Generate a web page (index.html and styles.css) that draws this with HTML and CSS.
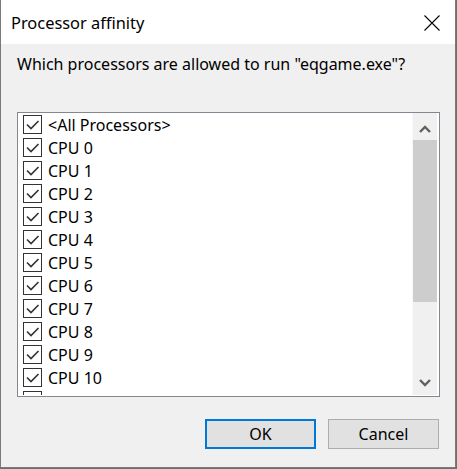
FILE: index.html
```html
<!DOCTYPE html>
<html lang="en">
<head>
<meta charset="utf-8">
<title>Processor affinity</title>
<link rel="stylesheet" href="styles.css">
</head>
<body>
<div class="window">
  <div class="titlebar">
    <span class="title">Processor affinity</span>
    <span class="close">
      <svg width="16" height="16" viewBox="0 0 16 16"><path d="M0.5 0.5 L15.5 15.5 M15.5 0.5 L0.5 15.5" stroke="#000" stroke-width="1.1" fill="none"/></svg>
    </span>
  </div>
  <div class="content">
    <p class="prompt">Which processors are allowed to run "eqgame.exe"?</p>
    <div class="listbox">
      <ul class="items">
        <li class="row"><span class="box"><svg width="17" height="17" viewBox="0 0 17 17"><path d="M3 8.5 L7 12.5 L14.5 5" stroke="#333" stroke-width="1.6" fill="none"/></svg></span><span class="label">&lt;All Processors&gt;</span></li>
        <li class="row"><span class="box"><svg width="17" height="17" viewBox="0 0 17 17"><path d="M3 8.5 L7 12.5 L14.5 5" stroke="#333" stroke-width="1.6" fill="none"/></svg></span><span class="label">CPU 0</span></li>
        <li class="row"><span class="box"><svg width="17" height="17" viewBox="0 0 17 17"><path d="M3 8.5 L7 12.5 L14.5 5" stroke="#333" stroke-width="1.6" fill="none"/></svg></span><span class="label">CPU 1</span></li>
        <li class="row"><span class="box"><svg width="17" height="17" viewBox="0 0 17 17"><path d="M3 8.5 L7 12.5 L14.5 5" stroke="#333" stroke-width="1.6" fill="none"/></svg></span><span class="label">CPU 2</span></li>
        <li class="row"><span class="box"><svg width="17" height="17" viewBox="0 0 17 17"><path d="M3 8.5 L7 12.5 L14.5 5" stroke="#333" stroke-width="1.6" fill="none"/></svg></span><span class="label">CPU 3</span></li>
        <li class="row"><span class="box"><svg width="17" height="17" viewBox="0 0 17 17"><path d="M3 8.5 L7 12.5 L14.5 5" stroke="#333" stroke-width="1.6" fill="none"/></svg></span><span class="label">CPU 4</span></li>
        <li class="row"><span class="box"><svg width="17" height="17" viewBox="0 0 17 17"><path d="M3 8.5 L7 12.5 L14.5 5" stroke="#333" stroke-width="1.6" fill="none"/></svg></span><span class="label">CPU 5</span></li>
        <li class="row"><span class="box"><svg width="17" height="17" viewBox="0 0 17 17"><path d="M3 8.5 L7 12.5 L14.5 5" stroke="#333" stroke-width="1.6" fill="none"/></svg></span><span class="label">CPU 6</span></li>
        <li class="row"><span class="box"><svg width="17" height="17" viewBox="0 0 17 17"><path d="M3 8.5 L7 12.5 L14.5 5" stroke="#333" stroke-width="1.6" fill="none"/></svg></span><span class="label">CPU 7</span></li>
        <li class="row"><span class="box"><svg width="17" height="17" viewBox="0 0 17 17"><path d="M3 8.5 L7 12.5 L14.5 5" stroke="#333" stroke-width="1.6" fill="none"/></svg></span><span class="label">CPU 8</span></li>
        <li class="row"><span class="box"><svg width="17" height="17" viewBox="0 0 17 17"><path d="M3 8.5 L7 12.5 L14.5 5" stroke="#333" stroke-width="1.6" fill="none"/></svg></span><span class="label">CPU 9</span></li>
        <li class="row"><span class="box"><svg width="17" height="17" viewBox="0 0 17 17"><path d="M3 8.5 L7 12.5 L14.5 5" stroke="#333" stroke-width="1.6" fill="none"/></svg></span><span class="label">CPU 10</span></li>
        <li class="row"><span class="box"></span></li>
      </ul>
      <div class="scrollbar">
        <div class="sb-btn sb-up"><svg width="12" height="8" viewBox="0 0 12 8"><path d="M1 7 L6 2 L11 7" stroke="#606060" stroke-width="2.4" fill="none"/></svg></div>
        <div class="thumb"></div>
        <div class="track"></div>
        <div class="sb-btn sb-down"><svg width="12" height="8" viewBox="0 0 12 8"><path d="M1 1 L6 6 L11 1" stroke="#606060" stroke-width="2.4" fill="none"/></svg></div>
      </div>
    </div>
    <div class="actions">
      <button class="btn btn-default">OK</button>
      <button class="btn">Cancel</button>
    </div>
  </div>
</div>
</body>
</html>
```
FILE: styles.css
```css
html, body {
  margin: 0;
  padding: 0;
}
body {
  background: #6e6e6e;
  width: 457px;
  height: 469px;
  overflow: hidden;
  font-family: "Noto Sans", "Open Sans", sans-serif;
  font-size: 16px;
  color: #000;
}
.window {
  width: 456px;
  height: 468px;
  box-sizing: border-box;
  border-left: 1px solid #7a7a7a;
  border-right: 1px solid #7a7a7a;
  border-bottom: 1px solid #7a7a7a;
  display: flex;
  flex-direction: column;
  background: #f0f0f0;
}
.titlebar {
  height: 44px;
  flex: none;
  background: #fff;
  display: flex;
  align-items: center;
  justify-content: space-between;
}
.title {
  padding-left: 10px;
  padding-top: 1px;
  line-height: 22px;
  font-size: 16.4px;
}
.close {
  width: 46px;
  height: 44px;
  display: flex;
  align-items: center;
  justify-content: center;
  padding-top: 1px;
  box-sizing: border-box;
}
.close svg {
  display: block;
}
.content {
  flex: 1;
  padding: 9px 0 0 16px;
}
.prompt {
  margin: 0;
  line-height: 22px;
  height: 22px;
}
.listbox {
  margin-top: 37px;
  width: 423px;
  height: 285px;
  box-sizing: border-box;
  border: 1px solid #828790;
  background: #fff;
  padding: 0 2px 1px 0;
  display: flex;
}
.items {
  list-style: none;
  margin: 0;
  padding: 0 0 0 5px;
  flex: 1;
  overflow: hidden;
}
.row {
  height: 23px;
  display: flex;
  align-items: center;
}
.box {
  width: 19px;
  height: 19px;
  box-sizing: border-box;
  border: 1px solid #333;
  background: #fff;
  flex: none;
}
.box svg {
  display: block;
}
.label {
  margin-left: 6px;
  line-height: 22px;
  white-space: nowrap;
}
.scrollbar {
  width: 25px;
  flex: none;
  background: #f0f0f0;
  border-left: 1px solid #f6f9fc;
  box-sizing: border-box;
  display: flex;
  flex-direction: column;
}
.sb-btn {
  height: 27px;
  flex: none;
  display: flex;
  justify-content: center;
}
.sb-btn svg {
  display: block;
}
.sb-up {
  align-items: flex-start;
  padding-top: 12px;
  box-sizing: border-box;
}
.sb-down {
  align-items: flex-start;
  padding-top: 11px;
  box-sizing: border-box;
}
.thumb {
  height: 162px;
  flex: none;
  background: #cdcdcd;
}
.track {
  flex: 1;
}
.actions {
  margin-top: 22px;
  width: 422px;
  display: flex;
  justify-content: flex-end;
  gap: 12px;
}
.btn {
  width: 111px;
  height: 30px;
  box-sizing: border-box;
  border: 1px solid #adadad;
  background: #e1e1e1;
  font-family: "Noto Sans", "Open Sans", sans-serif;
  font-size: 16px;
  color: #000;
  padding: 0;
  margin: 0;
  line-height: 22px;
}
.btn-default {
  border: 2px solid #0078d7;
}
```
